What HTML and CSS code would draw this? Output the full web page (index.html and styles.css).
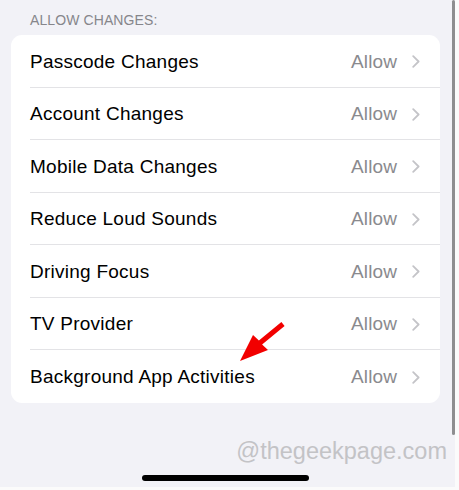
FILE: index.html
```html
<!DOCTYPE html>
<html>
<head>
<meta charset="utf-8">
<link rel="stylesheet" href="styles.css">
</head>
<body>
<div class="screen">
  <div class="section-header">ALLOW CHANGES:</div>
  <div class="card">
    <div class="row"><div class="row-inner"><span class="label">Passcode Changes</span><span class="value">Allow</span><svg class="chev" viewBox="0 0 8 13"><path d="M1.2 1.2 L6.6 6.5 L1.2 11.8"/></svg></div></div>
    <div class="row"><div class="row-inner"><span class="label">Account Changes</span><span class="value">Allow</span><svg class="chev" viewBox="0 0 8 13"><path d="M1.2 1.2 L6.6 6.5 L1.2 11.8"/></svg></div></div>
    <div class="row"><div class="row-inner"><span class="label">Mobile Data Changes</span><span class="value">Allow</span><svg class="chev" viewBox="0 0 8 13"><path d="M1.2 1.2 L6.6 6.5 L1.2 11.8"/></svg></div></div>
    <div class="row"><div class="row-inner"><span class="label">Reduce Loud Sounds</span><span class="value">Allow</span><svg class="chev" viewBox="0 0 8 13"><path d="M1.2 1.2 L6.6 6.5 L1.2 11.8"/></svg></div></div>
    <div class="row"><div class="row-inner"><span class="label">Driving Focus</span><span class="value">Allow</span><svg class="chev" viewBox="0 0 8 13"><path d="M1.2 1.2 L6.6 6.5 L1.2 11.8"/></svg></div></div>
    <div class="row"><div class="row-inner"><span class="label">TV Provider</span><span class="value">Allow</span><svg class="chev" viewBox="0 0 8 13"><path d="M1.2 1.2 L6.6 6.5 L1.2 11.8"/></svg></div></div>
    <div class="row"><div class="row-inner"><span class="label">Background App Activities</span><span class="value">Allow</span><svg class="chev" viewBox="0 0 8 13"><path d="M1.2 1.2 L6.6 6.5 L1.2 11.8"/></svg></div></div>
  </div>
  <div class="watermark">@thegeekpage.com</div>
  <div class="home-indicator"></div>
  <div class="scrollbar"></div>
  <svg class="arrow" viewBox="0 0 459 490" width="459" height="490">
    <polygon points="240,361 253,335 258.9,340.6 281.4,322.1 284.6,325.9 262.1,344.4 268,350" fill="#f20000"/>
  </svg>
</div>
</body>
</html>
```

FILE: styles.css
```css
html, body {
  margin: 0;
  padding: 0;
  background: #fbfbfb;
}
body {
  font-family: "Liberation Sans", Arial, sans-serif;
}
.screen {
  position: relative;
  width: 455px;
  height: 487px;
  background: #f2f2f7;
  overflow: hidden;
  display: flex;
  flex-direction: column;
}
.section-header {
  margin: 12px 0 7px 30px;
  font-size: 14px;
  line-height: 16px;
  color: #86868b;
  letter-spacing: 0.1px;
}
.card {
  margin: 0 15px 0 11px;
  width: 429px;
  background: #ffffff;
  border-radius: 11px;
  overflow: hidden;
}
.row {
  padding-left: 19px;
}
.row-inner {
  box-sizing: border-box;
  height: 52.5px;
  display: flex;
  align-items: center;
  padding-top: 2px;
  padding-right: 20px;
  border-bottom: 1px solid #e3e3e6;
}
.row:last-child .row-inner {
  border-bottom: none;
}
.label {
  flex: 1;
  font-size: 19px;
  letter-spacing: 0.25px;
  color: #000;
}
.value {
  font-size: 19px;
  letter-spacing: 0.1px;
  color: #8a8a8e;
}
.chev {
  width: 8px;
  height: 13px;
  margin-left: 15px;
  fill: none;
  stroke: #c4c4c8;
  stroke-width: 1.8;
  stroke-linecap: round;
  stroke-linejoin: round;
}
.watermark {
  margin-top: 34px;
  align-self: flex-end;
  padding-right: 8px;
  font-size: 23.5px;
  line-height: 28px;
  color: #c3c3c6;
}
.home-indicator {
  margin: 10px 0 0 142px;
  width: 167px;
  height: 6.5px;
  border-radius: 4px;
  background: #000;
}
.scrollbar {
  position: absolute;
  left: 452px;
  top: 0;
  width: 3px;
  height: 435px;
  border-radius: 2px;
  background: #8e8e90;
}
.arrow {
  position: absolute;
  left: 0;
  top: 0;
  pointer-events: none;
}
```
